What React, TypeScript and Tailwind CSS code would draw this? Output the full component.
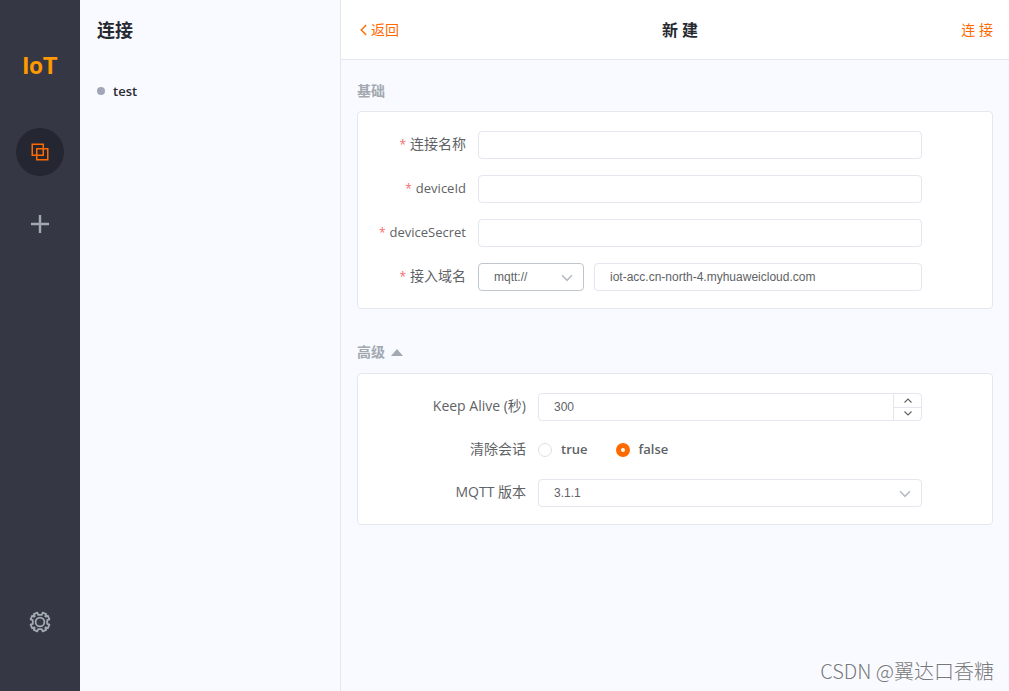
import { useState, type ReactNode } from 'react';

const inputClass =
  "h-7 w-full min-w-0 rounded border border-[#e4e7ef] bg-white px-[15px] font-['Liberation_Sans',sans-serif] text-xs text-[#606266] outline-none";

function Required() {
  return <span className="mr-1 text-xs text-[#f56c6c]">*</span>;
}

function Card({ children }: { children: ReactNode }) {
  return (
    <div className="flex flex-col gap-4 rounded border border-[#e4e7ef] bg-white pt-[19px] pr-[70px] pb-[17px]">
      {children}
    </div>
  );
}

function BasicRow({ id, label, children }: { id: string; label: ReactNode; children: ReactNode }) {
  return (
    <div className="grid grid-cols-[108px_1fr] items-center gap-3">
      <label htmlFor={id} className="pb-0.5 text-right leading-6 whitespace-nowrap">
        <Required />
        {label}
      </label>
      {children}
    </div>
  );
}

function Chevron({ className }: { className: string }) {
  return (
    <svg viewBox="0 0 12 8" className={className} fill="none" stroke="#b8bcc5" strokeWidth="1.6">
      <path d="M1 1.2 6 6.4 11 1.2" />
    </svg>
  );
}

export default function App() {
  const [clean, setClean] = useState(false);
  const [open, setOpen] = useState(true);
  const [keepAlive, setKeepAlive] = useState(300);

  return (
    <div className="relative flex min-h-screen bg-[#f9faff] font-['Open_Sans','Noto_Sans_CJK_SC',sans-serif] text-[13px] text-[#606266]">
      <nav className="flex w-20 shrink-0 flex-col items-center bg-[#353844] pt-[50px] pb-[57px]">
        <div className="font-['Roboto',sans-serif] text-2xl leading-8 font-bold text-[#ff9900]">IoT</div>
        <button aria-label="连接" className="mt-[46px] flex size-12 items-center justify-center rounded-full bg-[#242731]">
          <svg viewBox="0 0 18 18" className="size-[18px]" fill="none" stroke="#ff6a00" strokeWidth="1.5">
            <path d="M1.25 1.25h11v11h-11zM5.75 5.75h11v11h-11z" />
          </svg>
        </button>
        <button aria-label="新建" className="mt-6 flex size-12 items-center justify-center">
          <svg viewBox="0 0 18 18" className="size-[18px]" fill="none" stroke="#a2a9b0" strokeWidth="2.4">
            <path d="M9 0v18M0 9h18" />
          </svg>
        </button>
        <button aria-label="设置" className="mt-auto flex size-6 items-center justify-center">
          <svg viewBox="0 0 24 24" className="size-6" fill="none" stroke="#a2a9b0" strokeWidth="1.8" strokeLinejoin="round">
            <path d="M10.2 4.8 9.3 2.6 5.8 4.1 6.7 6.3 6.3 6.7 4.1 5.8 2.6 9.3 4.8 10.2V13.8L2.6 14.7 4.1 18.2 6.3 17.3 6.7 17.7 5.8 19.9 9.3 21.4 10.2 19.2H13.8L14.7 21.4 18.2 19.9 17.3 17.7 17.7 17.3 19.9 18.2 21.4 14.7 19.2 13.8V10.2L21.4 9.3 19.9 5.8 17.7 6.7 17.3 6.3 18.2 4.1 14.7 2.6 13.8 4.8Z" />
            <circle cx="12" cy="12" r="4.4" />
          </svg>
        </button>
      </nav>

      <aside className="w-[261px] shrink-0 border-r border-[#e4e7ef] px-[17px] pt-4 text-[#262930]">
        <h1 className="text-lg leading-7 font-bold">连接</h1>
        <a href="#test" className="mt-9 flex items-center gap-2 leading-[22px] font-semibold">
          <span className="size-2 rounded-full bg-[#a2a7b7]" />
          test
        </a>
      </aside>

      <main className="min-w-0 flex-1">
        <header className="grid h-[60px] grid-cols-3 items-center border-b border-[#e4e7ef] bg-white px-4 text-[#ff6a00]">
          <button className="flex items-center gap-1 justify-self-start pl-[3px] text-sm">
            <svg viewBox="0 0 7 12" className="h-3 w-[7px]" fill="none" stroke="currentColor" strokeWidth="1.4">
              <path d="M6.2 1 1.2 6l5 5" />
            </svg>
            返回
          </button>
          <h2 className="justify-self-center pl-[10px] text-base font-bold text-[#262930]">新 建</h2>
          <button className="justify-self-end text-sm">连 接</button>
        </header>

        <div className="px-4 pt-5">
          <h3 className="mb-[9px] text-sm leading-[22px] font-bold text-[#a2a9b0]">基础</h3>
          <Card>
            <BasicRow id="name" label={<span className="text-sm">连接名称</span>}>
              <input id="name" className={inputClass} />
            </BasicRow>
            <BasicRow id="device-id" label="deviceId">
              <input id="device-id" className={inputClass} />
            </BasicRow>
            <BasicRow id="device-secret" label="deviceSecret">
              <input id="device-secret" className={inputClass} />
            </BasicRow>
            <BasicRow id="host" label={<span className="text-sm">接入域名</span>}>
              <div className="flex gap-[10px]">
                <div className="grid w-[106px] shrink-0 items-center">
                  <select
                    aria-label="协议"
                    className="col-start-1 row-start-1 h-7 appearance-none rounded border border-[#c0c4cc] bg-white px-[15px] font-['Liberation_Sans',sans-serif] text-xs outline-none"
                  >
                    <option>mqtt://</option>
                    <option>mqtts://</option>
                  </select>
                  <Chevron className="pointer-events-none col-start-1 row-start-1 mt-0.5 mr-[11px] h-2 w-3 justify-self-end" />
                </div>
                <input id="host" className={inputClass} defaultValue="iot-acc.cn-north-4.myhuaweicloud.com" />
              </div>
            </BasicRow>
          </Card>

          <button
            onClick={() => setOpen(!open)}
            className="mt-8 mb-[10px] flex items-center gap-1.5 text-sm leading-[22px] font-bold text-[#a2a9b0]"
          >
            高级
            <svg viewBox="0 0 12 7" className="h-[7px] w-3" fill="currentColor">
              <path d="M6 0 12 7H0z" />
            </svg>
          </button>
          {open && (
            <Card>
              <div className="grid grid-cols-[168px_1fr] items-center gap-3">
                <label htmlFor="keep-alive" className="pb-0.5 text-right text-sm">
                  Keep Alive (秒)
                </label>
                <div className="flex h-7 overflow-hidden rounded border border-[#e4e7ef] bg-white">
                  <input
                    id="keep-alive"
                    inputMode="numeric"
                    value={keepAlive}
                    onChange={(e) => setKeepAlive(Number(e.target.value) || 0)}
                    className="min-w-0 flex-1 px-[15px] font-['Liberation_Sans',sans-serif] text-xs outline-none"
                  />
                  <div className="flex w-7 flex-col border-l border-[#e4e7ef]">
                    <button
                      aria-label="增加"
                      onClick={() => setKeepAlive(keepAlive + 1)}
                      className="flex flex-1 items-center justify-center border-b border-[#e4e7ef]"
                    >
                      <svg viewBox="0 0 8 5" className="h-[5px] w-2" fill="none" stroke="#606266" strokeWidth="1.1">
                        <path d="M.5 4.5 4 1l3.5 3.5" />
                      </svg>
                    </button>
                    <button
                      aria-label="减少"
                      onClick={() => setKeepAlive(keepAlive - 1)}
                      className="flex flex-1 items-center justify-center"
                    >
                      <svg viewBox="0 0 8 5" className="h-[5px] w-2" fill="none" stroke="#606266" strokeWidth="1.1">
                        <path d="M.5.5 4 4 7.5.5" />
                      </svg>
                    </button>
                  </div>
                </div>
              </div>

              <div className="grid h-[26px] grid-cols-[168px_1fr] items-center gap-3">
                <span id="clean-label" className="pb-0.5 text-right text-sm">
                  清除会话
                </span>
                <div role="radiogroup" aria-labelledby="clean-label" className="flex gap-7 font-semibold">
                  {[true, false].map((value) => (
                    <label key={String(value)} className="flex items-center gap-[9px]">
                      <input
                        type="radio"
                        name="clean"
                        checked={clean === value}
                        onChange={() => setClean(value)}
                        className="size-[14px] appearance-none rounded-full border border-[#dcdfe6] bg-white checked:border-5 checked:border-[#ff6a00]"
                      />
                      {String(value)}
                    </label>
                  ))}
                </div>
              </div>

              <div className="grid grid-cols-[168px_1fr] items-center gap-3">
                <label htmlFor="version" className="pb-0.5 text-right text-sm">
                  MQTT 版本
                </label>
                <div className="grid items-center">
                  <select id="version" className={`${inputClass} col-start-1 row-start-1 appearance-none`}>
                    <option>3.1.1</option>
                    <option>5.0</option>
                  </select>
                  <Chevron className="pointer-events-none col-start-1 row-start-1 mt-0.5 mr-[11px] h-2 w-3 justify-self-end" />
                </div>
              </div>
            </Card>
          )}
        </div>
      </main>

      <div className="pointer-events-none absolute right-[15px] bottom-1 font-['Noto_Sans_CJK_SC',sans-serif] text-xl leading-8 font-light text-[#77787c] [text-shadow:-1px_-1px_0_#ffffff]">
        CSDN @翼达口香糖
      </div>
    </div>
  );
}
